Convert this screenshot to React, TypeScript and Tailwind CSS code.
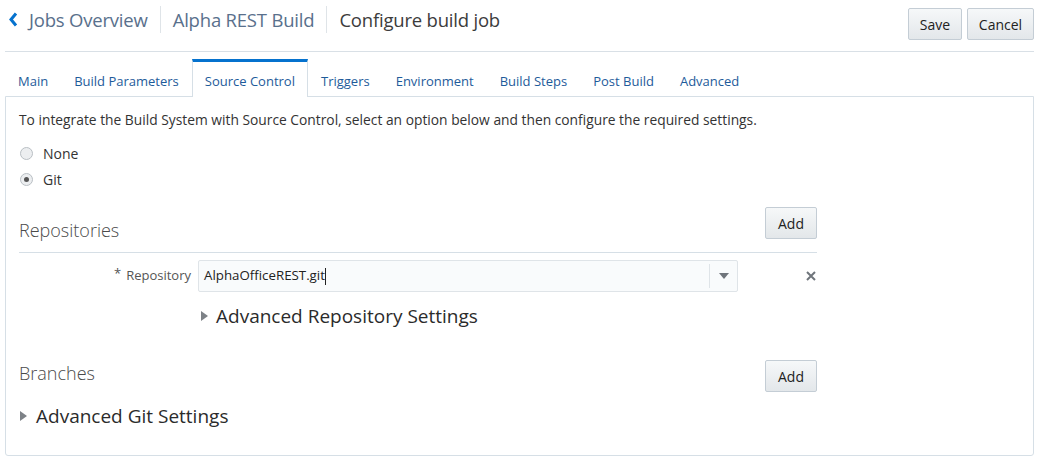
import { useState } from "react";

const tabs = [
  "Main",
  "Build Parameters",
  "Source Control",
  "Triggers",
  "Environment",
  "Build Steps",
  "Post Build",
  "Advanced",
];

function Caret() {
  return (
    <svg width="8" height="12" viewBox="0 0 8 12" className="shrink-0">
      <path d="M0 1 L7 6 L0 11 Z" fill="#7d8287" />
    </svg>
  );
}

function Radio({ checked }: { checked?: boolean }) {
  return (
    <span className="w-[13px] h-[13px] rounded-full border border-[#b9bfc4] bg-[#eceef0] flex items-center justify-center">
      {checked && <span className="w-[5px] h-[5px] rounded-full bg-[#555]" />}
    </span>
  );
}

function GrayButton({ label, w }: { label: string; w: string }) {
  return (
    <button
      className={`${w} h-[32px] rounded-[2px] border border-[#c4cdd5] bg-gradient-to-b from-[#f6f8f9] to-[#e3e7ea] text-[14px] text-[#222]`}
    >
      {label}
    </button>
  );
}

export default function App() {
  const [source, setSource] = useState("git");

  return (
    <div
      className="w-[1039px] h-[468px] bg-white px-[5px] text-[#333]"
      style={{ fontFamily: '"Open Sans", "Noto Sans", sans-serif' }}
    >
      {/* HEADER */}
      <div className="h-[52px] flex items-start justify-between border-b border-[#d9e0e6]">
        <div className="flex items-center h-[38px] pt-[1px]">
          <svg width="11" height="15" viewBox="0 0 11 15" className="ml-[3px] mr-[10px]">
            <path d="M8 1.5 L3 7.5 L8 13.5" stroke="#0572ce" strokeWidth="3" fill="none" />
          </svg>
          <span className="text-[18.5px] text-[#59708c] tracking-[-0.2px]">Jobs Overview</span>
          <span className="w-px h-[27px] bg-[#dfe4e8] mx-[12px]" />
          <span className="text-[18.5px] text-[#59708c] tracking-[-0.2px]">Alpha REST Build</span>
          <span className="w-px h-[27px] bg-[#dfe4e8] mx-[12px]" />
          <span className="text-[18.5px] text-[#3c3c3c] tracking-[-0.2px]">Configure build job</span>
        </div>
        <div className="flex gap-[5px] mt-[8px]">
          <GrayButton label="Save" w="w-[54px]" />
          <GrayButton label="Cancel" w="w-[67px]" />
        </div>
      </div>

      {/* TABS */}
      <div className="flex mt-[7px] h-[38px] relative z-10">
        {tabs.map((t) =>
          t === "Source Control" ? (
            <div
              key={t}
              className="px-[12px] border-t-[3px] border-t-[#0572ce] border-x border-x-[#d6dfe6] bg-white flex items-center pt-[5px] h-[38px]"
            >
              <span className="text-[13px] text-[#1e5b9a]">{t}</span>
            </div>
          ) : (
            <div key={t} className="px-[13px] flex items-center pt-[8px]">
              <span className="text-[13px] text-[#1e5b9a]">{t}</span>
            </div>
          )
        )}
      </div>

      {/* PANEL */}
      <div className="-mt-px border border-[#d6dfe6] rounded-b-[3px] h-[360px] px-[13px] pt-[13px]">
        <p className="text-[13.8px] leading-[20px]">
          To integrate the Build System with Source Control, select an option below and then
          configure the required settings.
        </p>

        <div className="mt-[10px]">
          <div
            className="h-[26px] flex items-center gap-[10px] pl-[1px] cursor-pointer"
            onClick={() => setSource("none")}
          >
            <Radio checked={source === "none"} />
            <span className="text-[14px]">None</span>
          </div>
          <div
            className="h-[26px] flex items-center gap-[10px] pl-[1px] cursor-pointer"
            onClick={() => setSource("git")}
          >
            <Radio checked={source === "git"} />
            <span className="text-[14px]">Git</span>
          </div>
        </div>

        <div className="w-[798px]">
          {/* REPOSITORIES */}
          <div className="mt-[15px] flex items-start justify-between border-b border-[#d6dfe6] pb-[10px]">
            <span className="mt-[11px] text-[18px] leading-[24px] font-light text-[#4a4a4a]">
              Repositories
            </span>
            <GrayButton label="Add" w="w-[52px]" />
          </div>

          <div className="mt-[7px] flex items-center">
            <div className="w-[172px] text-right text-[13px] text-[#555] flex justify-end items-start gap-[5px]">
              <span className="text-[13px] leading-[10px] mt-[2px]">*</span>
              <span>Repository</span>
            </div>
            <div className="ml-[7px] w-[540px] h-[32px] border border-[#dfe4e8] rounded-[2px] bg-[#f9fbfc] flex items-center">
              <span className="flex-1 pl-[5px] text-[13.3px] text-[#222]">
                AlphaOfficeREST.git
                <span className="inline-block w-px h-[17px] bg-[#222] align-middle" />
              </span>
              <span className="w-px h-[24px] bg-[#dfe4e8]" />
              <span className="w-[27px] flex justify-center">
                <svg width="10" height="6" viewBox="0 0 10 6">
                  <path d="M0 0 L10 0 L5 6 Z" fill="#6f757b" />
                </svg>
              </span>
            </div>
            <span className="ml-[68px]">
              <svg width="10" height="10" viewBox="0 0 10 10">
                <path d="M1 1 L9 9 M9 1 L1 9" stroke="#6f757b" strokeWidth="2" />
              </svg>
            </span>
          </div>

          <div className="mt-[10px] ml-[182px] h-[28px] flex items-center gap-[7px]">
            <Caret />
            <span className="text-[19px] text-[#2b2b2b]">Advanced Repository Settings</span>
          </div>

          {/* BRANCHES */}
          <div className="mt-[30px] flex items-start justify-between">
            <span className="mt-[1px] text-[18px] leading-[24px] font-light text-[#4a4a4a]">
              Branches
            </span>
            <GrayButton label="Add" w="w-[52px]" />
          </div>

          <div className="mt-[10px] h-[28px] flex items-center gap-[8px] pl-[1px]">
            <Caret />
            <span className="text-[19px] text-[#2b2b2b]">Advanced Git Settings</span>
          </div>
        </div>
      </div>
    </div>
  );
}
